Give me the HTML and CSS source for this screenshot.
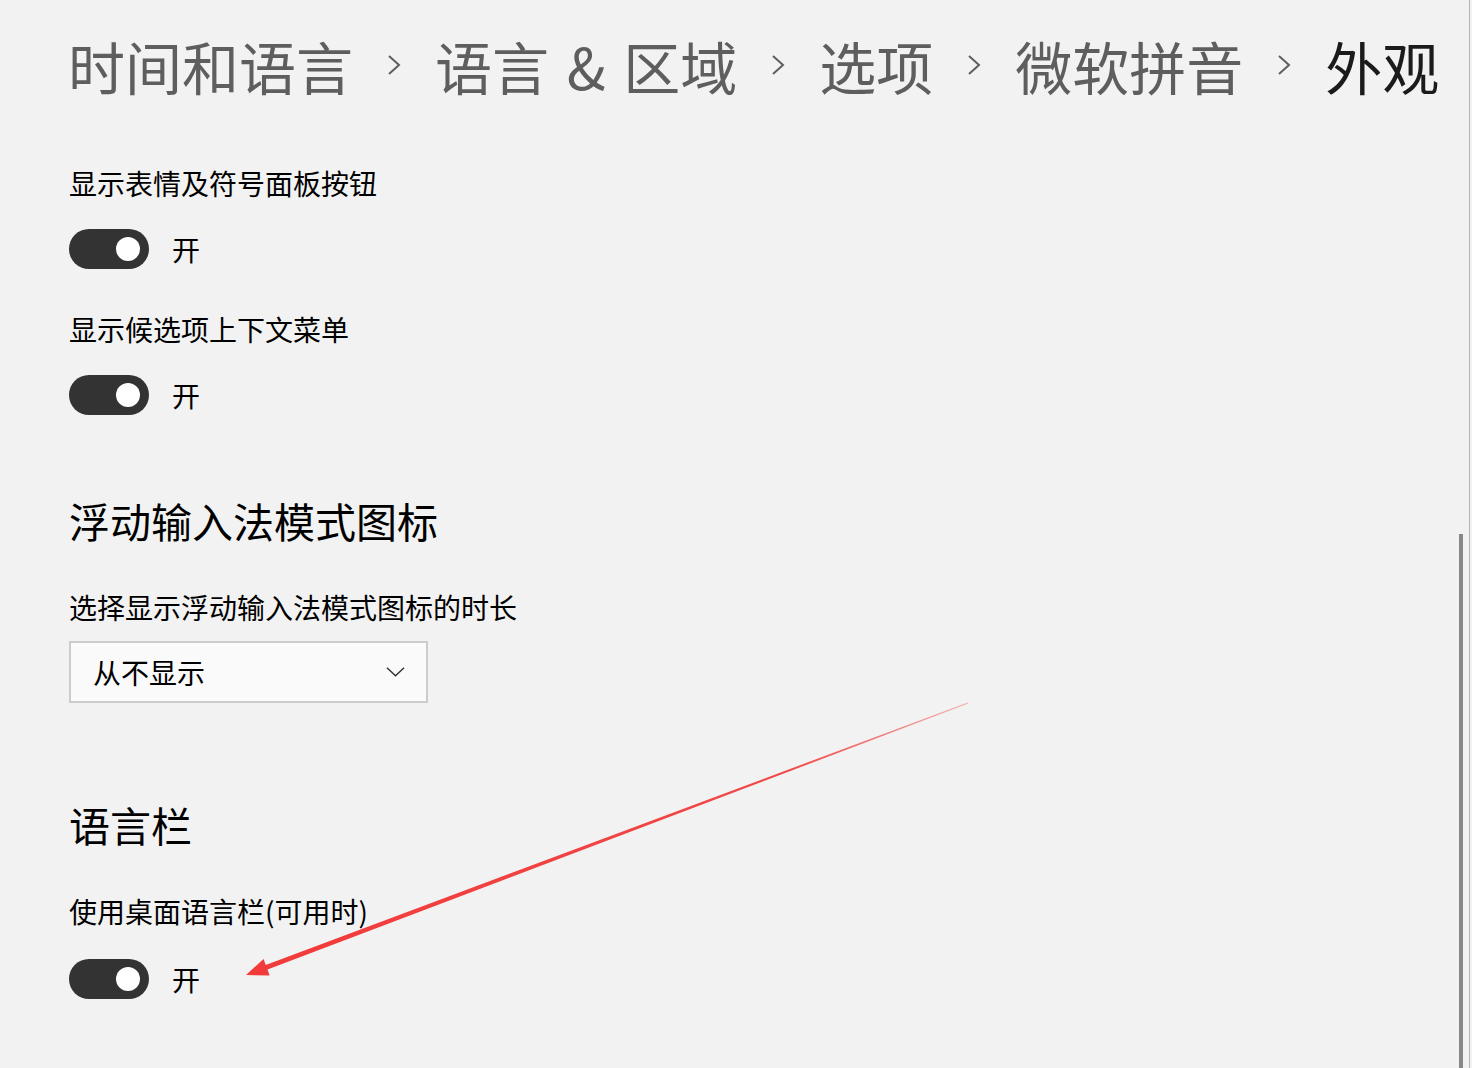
FILE: index.html
```html
<!DOCTYPE html>
<html lang="zh-CN">
<head>
    <meta charset="utf-8">
    <title>外观</title>
    <link rel="stylesheet" href="styles.css">
</head>
<body>
    <div class="page">
        <nav class="crumbs">
            <span>时间和语言</span>
            <svg class="sep" viewBox="0 0 14 22"><polyline points="2,2 12,11 2,20"/></svg>
            <span class="amp">语言 &amp; 区域</span>
            <svg class="sep" viewBox="0 0 14 22"><polyline points="2,2 12,11 2,20"/></svg>
            <span>选项</span>
            <svg class="sep" viewBox="0 0 14 22"><polyline points="2,2 12,11 2,20"/></svg>
            <span>微软拼音</span>
            <svg class="sep" viewBox="0 0 14 22"><polyline points="2,2 12,11 2,20"/></svg>
            <span class="current">外观</span>
        </nav>

        <div class="label first">显示表情及符号面板按钮</div>
        <div class="switch-row">
            <span class="switch"><span class="knob"></span></span>
            <span class="state">开</span>
        </div>

        <div class="label">显示候选项上下文菜单</div>
        <div class="switch-row">
            <span class="switch"><span class="knob"></span></span>
            <span class="state">开</span>
        </div>

        <h2 class="section">浮动输入法模式图标</h2>
        <div class="label">选择显示浮动输入法模式图标的时长</div>
        <div class="select">
            <span>从不显示</span>
            <svg class="caret" viewBox="0 0 20 12"><polyline points="1,1.5 10,10 19,1.5"/></svg>
        </div>

        <h2 class="section bar">语言栏</h2>
        <div class="label">使用桌面语言栏(可用时)</div>
        <div class="switch-row last">
            <span class="switch"><span class="knob"></span></span>
            <span class="state">开</span>
        </div>
    </div>

    <div class="rail"></div>
    <div class="thumb"></div>

    <!-- annotation arrow drawn on top of the screenshot -->
    <svg class="arrow" viewBox="0 0 1472 1068">
        <defs>
            <linearGradient id="fade" x1="968" y1="703" x2="246" y2="975" gradientUnits="userSpaceOnUse">
                <stop offset="0" stop-color="#f2b0b0"/>
                <stop offset="0.25" stop-color="#f04848"/>
                <stop offset="1" stop-color="#f23a3a"/>
            </linearGradient>
        </defs>
        <polygon fill="url(#fade)" points="968.2,703.5 267.5,969.5 269.6,975.5 246,975 263.6,958.9 265.7,964.9 967.8,702.5"/>
    </svg>
</body>
</html>
```

FILE: styles.css
```css
body {
    margin: 0;
    background-color: #f2f2f2;
    font-family: "Microsoft YaHei", "Noto Sans CJK SC", "Noto Sans", sans-serif;
    color: #000;
    height: 1068px;
    overflow: hidden;
}
.page {
    padding-left: 68px;
}
.crumbs {
    display: flex;
    align-items: center;
    gap: 34px;
    margin-top: 25px;
    height: 80px;
    font-size: 57px;
    line-height: 80px;
    color: #5e5e5e;
    white-space: nowrap;
}
.crumbs .amp {
    word-spacing: 5px;
}
.crumbs .current {
    color: #1b1b1b;
}
.sep {
    width: 14px;
    height: 22px;
    fill: none;
    stroke: #5e5e5e;
    stroke-width: 2;
}
.label {
    font-size: 28px;
    line-height: 40px;
    margin-top: 40px;
    padding-left: 1px;
}
.label.first {
    margin-top: 58px;
}
.switch-row {
    display: flex;
    align-items: center;
    gap: 23px;
    margin-top: 26px;
    padding-left: 1px;
}
.switch-row.last {
    margin-top: 28px;
}
.switch {
    display: flex;
    align-items: center;
    justify-content: flex-end;
    width: 80px;
    height: 40px;
    border-radius: 20px;
    background-color: #333;
    padding-right: 9px;
    box-sizing: border-box;
}
.knob {
    width: 24px;
    height: 24px;
    border-radius: 50%;
    background-color: #fff;
}
.state {
    font-size: 28px;
    line-height: 40px;
}
.section {
    margin: 77px 0 0 0;
    font-size: 41px;
    font-weight: normal;
    line-height: 56px;
    padding-left: 1px;
}
.section + .label {
    margin-top: 39px;
}
.section.bar {
    margin-top: 93px;
}
.select {
    display: flex;
    align-items: center;
    justify-content: space-between;
    width: 359px;
    height: 62px;
    margin-top: 14px;
    margin-left: 1px;
    padding: 0 21px 0 22px;
    box-sizing: border-box;
    border: 2px solid #cccccc;
    background-color: #fafafa;
    font-size: 28px;
}
.caret {
    width: 19px;
    height: 12px;
    fill: none;
    stroke: #333;
    stroke-width: 1.5;
}
.rail {
    position: absolute;
    top: 0;
    left: 1469px;
    width: 1px;
    height: 1068px;
    background-color: #b4b4b4;
}
.thumb {
    position: absolute;
    top: 534px;
    left: 1459px;
    width: 4px;
    height: 534px;
    background-color: #878787;
}
.arrow {
    position: absolute;
    top: 0;
    left: 0;
    width: 1472px;
    height: 1068px;
    pointer-events: none;
}
```
